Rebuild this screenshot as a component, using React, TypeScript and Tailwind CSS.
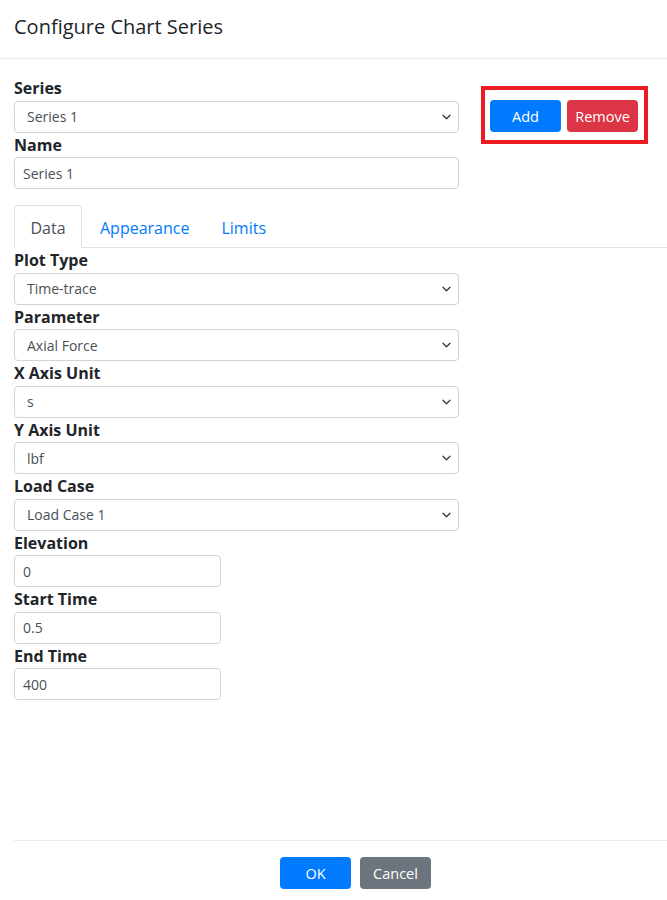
import React from "react";

const font = { fontFamily: '"Open Sans", "Liberation Sans", sans-serif' };

function Chevron() {
  return (
    <svg
      className="pointer-events-none absolute right-[8px] top-1/2 -translate-y-1/2"
      width="9"
      height="6"
      viewBox="0 0 9 6"
      fill="none"
    >
      <path d="M1 1.2l3.5 3.5 3.5-3.5" stroke="#343a40" strokeWidth="1.3" strokeLinecap="round" strokeLinejoin="round" />
    </svg>
  );
}

function SelectField({ label, value }: { label: string; value: string }) {
  return (
    <div>
      <label className="block pt-[1px] text-[16px] font-bold leading-[23.5px] text-[#212529]">{label}</label>
      <div className="relative w-[445px]">
        <select
          defaultValue={value}
          className="h-8 w-full appearance-none rounded border border-[#ced4da] bg-white pl-[12px] text-[14px] text-[#495057] outline-none"
        >
          <option>{value}</option>
        </select>
        <Chevron />
      </div>
    </div>
  );
}

function InputField({ label, value, width }: { label: string; value: string; width: string }) {
  return (
    <div>
      <label className="block pt-[1px] text-[16px] font-bold leading-[23.5px] text-[#212529]">{label}</label>
      <input
        defaultValue={value}
        className={`h-8 ${width} rounded border border-[#ced4da] bg-white pl-[8px] text-[14px] text-[#495057] outline-none`}
      />
    </div>
  );
}

export default function App() {
  return (
    <div className="h-[900px] w-[667px] bg-white" style={font}>
      {/* header */}
      <div className="flex h-[59px] items-center border-b border-[#e9ecef] px-[14px] pb-[4px]">
        <h5 className="text-[20px] font-medium text-[#212529]">Configure Chart Series</h5>
      </div>

      {/* body */}
      <div className="h-[781px] pl-[14px] pt-[17px]">
        <div className="flex">
          <div className="w-[445px]">
            <SelectField label="Series" value="Series 1" />
            <InputField label="Name" value="Series 1" width="w-[445px]" />
          </div>
          <div className="ml-[22px] mt-[10px]">
            <div className="flex h-[58px] w-[167px] gap-[6px] border-4 border-[#ed1c24] pl-[5px] pt-[10px]">
              <button className="h-8 w-[71px] rounded bg-[#007bff] pt-[1px] text-[14.5px] text-white">Add</button>
              <button className="h-8 w-[71px] rounded bg-[#dc3545] pt-[1px] text-[14.5px] text-white">Remove</button>
            </div>
          </div>
        </div>

        {/* tabs */}
        <div className="mt-[16px] flex h-[43px] border-b border-[#dee2e6]">
          <div className="-mb-px flex h-[43px] w-[68px] items-center justify-center rounded-t border border-[#dee2e6] border-b-white bg-white pt-[3px] text-[16px] text-[#495057]">
            Data
          </div>
          <div className="flex items-center pl-[18px] pt-[3px] text-[16px] text-[#007bff]">Appearance</div>
          <div className="flex items-center pl-[32px] pt-[3px] text-[16px] text-[#007bff]">Limits</div>
        </div>

        <SelectField label="Plot Type" value="Time-trace" />
        <SelectField label="Parameter" value="Axial Force" />
        <SelectField label="X Axis Unit" value="s" />
        <SelectField label="Y Axis Unit" value="lbf" />
        <SelectField label="Load Case" value="Load Case 1" />
        <InputField label="Elevation" value="0" width="w-[207px]" />
        <InputField label="Start Time" value="0.5" width="w-[207px]" />
        <InputField label="End Time" value="400" width="w-[207px]" />
      </div>

      {/* footer */}
      <div className="ml-[14px] flex gap-[9px] border-t border-[#e9ecef] pl-[266px] pt-[16px]">
        <button className="h-8 w-[71px] rounded bg-[#007bff] pt-[1px] text-[14.5px] text-white">OK</button>
        <button className="h-8 w-[71px] rounded bg-[#6c757d] pt-[1px] text-[14.5px] text-white">Cancel</button>
      </div>
    </div>
  );
}
